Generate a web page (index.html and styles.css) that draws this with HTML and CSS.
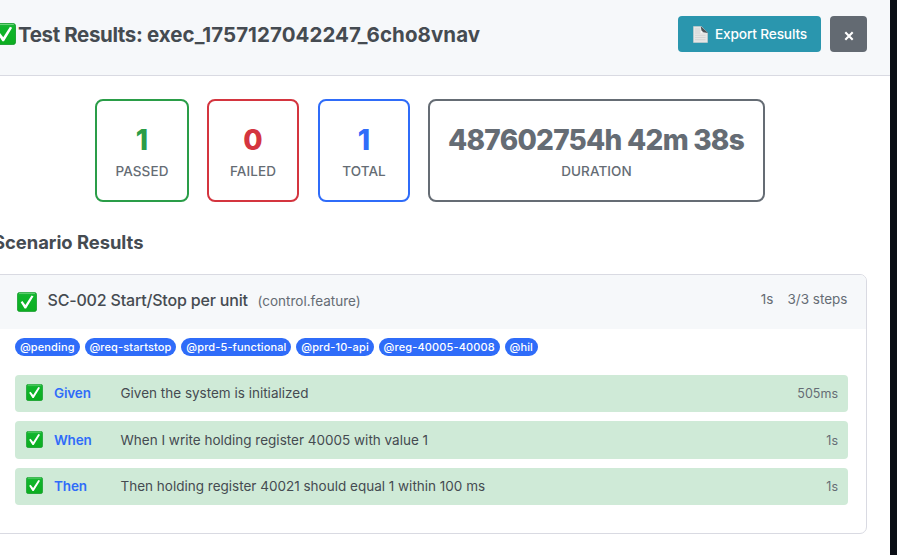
FILE: index.html
```html
<!DOCTYPE html>
<html lang="en">
<head>
<meta charset="utf-8">
<title>Test Results</title>
<link rel="stylesheet" href="styles.css">
</head>
<body>
<svg class="defs" aria-hidden="true">
  <defs>
    <linearGradient id="green" x1="0" y1="0" x2="0" y2="1">
      <stop offset="0" stop-color="#22b63c"/>
      <stop offset=".2" stop-color="#0fb52b"/>
      <stop offset="1" stop-color="#0cae20"/>
    </linearGradient>
    <symbol id="check" viewBox="0 0 20 20">
      <rect x=".4" y=".4" width="19.2" height="19.2" rx="2.4" fill="url(#green)" stroke="#159a2c" stroke-width=".8"/>
      <path d="M2 1.3h16" stroke="#72d77f" stroke-width=".9"/>
      <path d="M3.7 10.3 5.4 9.1 8.4 13 14.5 3.5 16.5 4.3 9.1 16.6 7.6 16.6Z" fill="#fff"/>
    </symbol>
  </defs>
</svg>
<main class="modal">
  <header class="modal-header">
    <h2 class="title"><svg class="title-check"><use href="#check"/></svg><span class="title-text"><span class="title-label">Test Results: </span>exec_1757127042247_6cho8vnav</span></h2>
    <div class="actions">
      <button class="btn export"><svg class="doc" viewBox="0 0 15 17"><path d="M.5.5H8.5L14.5 7V16.5H.5Z" fill="#e6e6e5" stroke="#cfcfce" stroke-width=".6"/><path d="M2 3h5M2 5h5M2 7h5M2 9.3h10.5M2 11.5h10.5M2 13.7h10.5" stroke="#c8c9c9" stroke-width=".6"/><path d="M7.8 .3 15 7 8.6 6Z" fill="#4c5357"/><path d="M7.8 .3 8.2 4.6 10.5 6.2 8 7Z" fill="#fafafa"/></svg><span>Export Results</span></button>
      <button class="btn close" aria-label="Close"><svg viewBox="0 0 10 10"><path d="M1.3 1.3 8.7 8.7M8.7 1.3 1.3 8.7" stroke="#fff" stroke-width="2.1"/></svg></button>
    </div>
  </header>
  <section class="stats">
    <div class="stat passed"><strong>1</strong><span>PASSED</span></div>
    <div class="stat failed"><strong>0</strong><span>FAILED</span></div>
    <div class="stat total"><strong>1</strong><span>TOTAL</span></div>
    <div class="stat duration"><strong>487602754h 42m 38s</strong><span>DURATION</span></div>
  </section>
  <h3 class="section-title">Scenario Results</h3>
  <article class="scenario">
    <div class="scenario-header">
      <svg class="scenario-check"><use href="#check"/></svg>
      <span class="name">SC-002 Start/Stop per unit</span>
      <span class="file">(control.feature)</span>
      <span class="meta"><span>1s</span><span>3/3 steps</span></span>
    </div>
    <div class="tags"><span class="tag">@pending</span><span class="tag">@req-startstop</span><span class="tag">@prd-5-functional</span><span class="tag">@prd-10-api</span><span class="tag">@reg-40005-40008</span><span class="tag">@hil</span></div>
    <div class="steps">
      <div class="step"><svg><use href="#check"/></svg><b>Given</b><span class="text">Given the system is initialized</span><span class="time">505ms</span></div>
      <div class="step tall"><svg><use href="#check"/></svg><b>When</b><span class="text">When I write holding register 40005 with value 1</span><span class="time">1s</span></div>
      <div class="step"><svg><use href="#check"/></svg><b>Then</b><span class="text">Then holding register 40021 should equal 1 within 100 ms</span><span class="time">1s</span></div>
    </div>
  </article>
</main>
</body>
</html>
```
FILE: styles.css
```css
* { box-sizing: border-box; }
body {
  margin: 0;
  height: 555px;
  overflow: hidden;
  background: #0a0e15;
  font-family: Inter, "Liberation Sans", sans-serif;
  color: #454b51;
}
svg { display: block; flex: none; }
.defs { position: absolute; width: 0; height: 0; }
.modal { width: 890px; height: 555px; background: #fff; overflow: hidden; }
.modal-header {
  display: flex;
  align-items: flex-start;
  justify-content: space-between;
  height: 76px;
  padding: 16px 23px 0 0;
  background: #f6f8fa;
  border-bottom: 1px solid #d9dae2;
}
.title {
  display: flex;
  margin: 0 0 0 -6px;
  font-size: 20.5px;
  line-height: 38px;
  font-weight: 700;
  letter-spacing: 0.06px;
  white-space: nowrap;
}
.title-label { letter-spacing: -0.38px; }
.title-check { width: 22px; height: 22px; margin: 7px 2px 0 0; }
.actions { display: flex; gap: 9px; }
.btn {
  display: flex;
  align-items: center;
  height: 36px;
  padding: 0;
  border: 0;
  border-radius: 4px;
  color: #fff;
  font: 500 13.7px/36px Inter, sans-serif;
  letter-spacing: -0.17px;
  white-space: nowrap;
}
.export { width: 143px; padding-left: 15px; background: #2a96ae; }
.doc { width: 15px; height: 17px; margin-right: 7px; }
.close { width: 37px; justify-content: center; background: #636a72; }
.close svg { width: 10px; height: 10px; margin-top: 3px; }
.stats { display: flex; padding: 23px 0 0 95px; }
.stat {
  display: flex;
  flex-direction: column;
  align-items: center;
  width: 92px;
  height: 103px;
  padding-top: 21px;
  border: 2px solid;
  border-radius: 8px;
  margin-right: 19px;
}
.stat strong { margin-left: -1px; font-size: 28px; line-height: 36px; font-weight: 800; letter-spacing: -0.75px; white-space: nowrap; }
.stat span { margin-top: 4px; font-size: 13.5px; line-height: 18px; font-weight: 500; letter-spacing: 0.1px; color: #656c74; }
.passed { width: 94px; margin-right: 18px; color: #2a9d48; }
.failed { color: #d4353f; }
.total { margin-right: 18px; color: #2f6cf9; }
.duration { width: 337px; margin-right: 0; color: #656c74; }
.section-title {
  margin: 28px 0 0 -7px;
  font-size: 18.4px;
  line-height: 24px;
  font-weight: 700;
  letter-spacing: -0.03px;
}
.scenario {
  width: 877px;
  height: 260px;
  margin: 20px 0 0 -10px;
  border: 1px solid #d9dae2;
  border-radius: 7px;
  overflow: hidden;
}
.scenario-header {
  display: flex;
  height: 54px;
  padding: 0 18.5px 0 26px;
  background: #f6f8fa;
  line-height: 50px;
  white-space: nowrap;
}
.scenario-check { width: 20px; height: 20px; margin: 17px 10.5px 0 0; }
.name { width: 210px; font-size: 16px; font-weight: 500; letter-spacing: -0.18px; }
.file { font-size: 13.5px; line-height: 53px; color: #656c74; }
.meta { display: flex; gap: 14px; margin-left: auto; font-size: 13.5px; line-height: 49px; color: #656c74; }
.tags { display: flex; gap: 5px; padding: 9px 0 0 24px; }
.tag {
  height: 18px;
  padding: 0 4.9px;
  border-radius: 9px;
  background: #2f6cf9;
  color: #fff;
  font-size: 11px;
  line-height: 18px;
  font-weight: 500;
  letter-spacing: 0.13px;
  white-space: nowrap;
}
.steps { display: flex; flex-direction: column; gap: 9px; padding: 19px 18px 0 24px; }
.step {
  display: flex;
  align-items: center;
  height: 37px;
  padding: 0 10px 0 11px;
  border-radius: 4px;
  background: #cfead7;
  font-size: 13.5px;
  line-height: 18px;
  white-space: nowrap;
}
.tall { height: 38px; }
.step svg { width: 17px; height: 17px; margin: 0 11px 2px 0; }
.step b { width: 66.5px; font-weight: 600; letter-spacing: -0.15px; color: #2f6cf9; }
.step:not(.tall) b, .step:not(.tall) .text { padding-bottom: 1px; }
.time { margin-left: auto; font-size: 12.5px; color: #656c74; }
.tall .time { padding-top: 1px; }
```
